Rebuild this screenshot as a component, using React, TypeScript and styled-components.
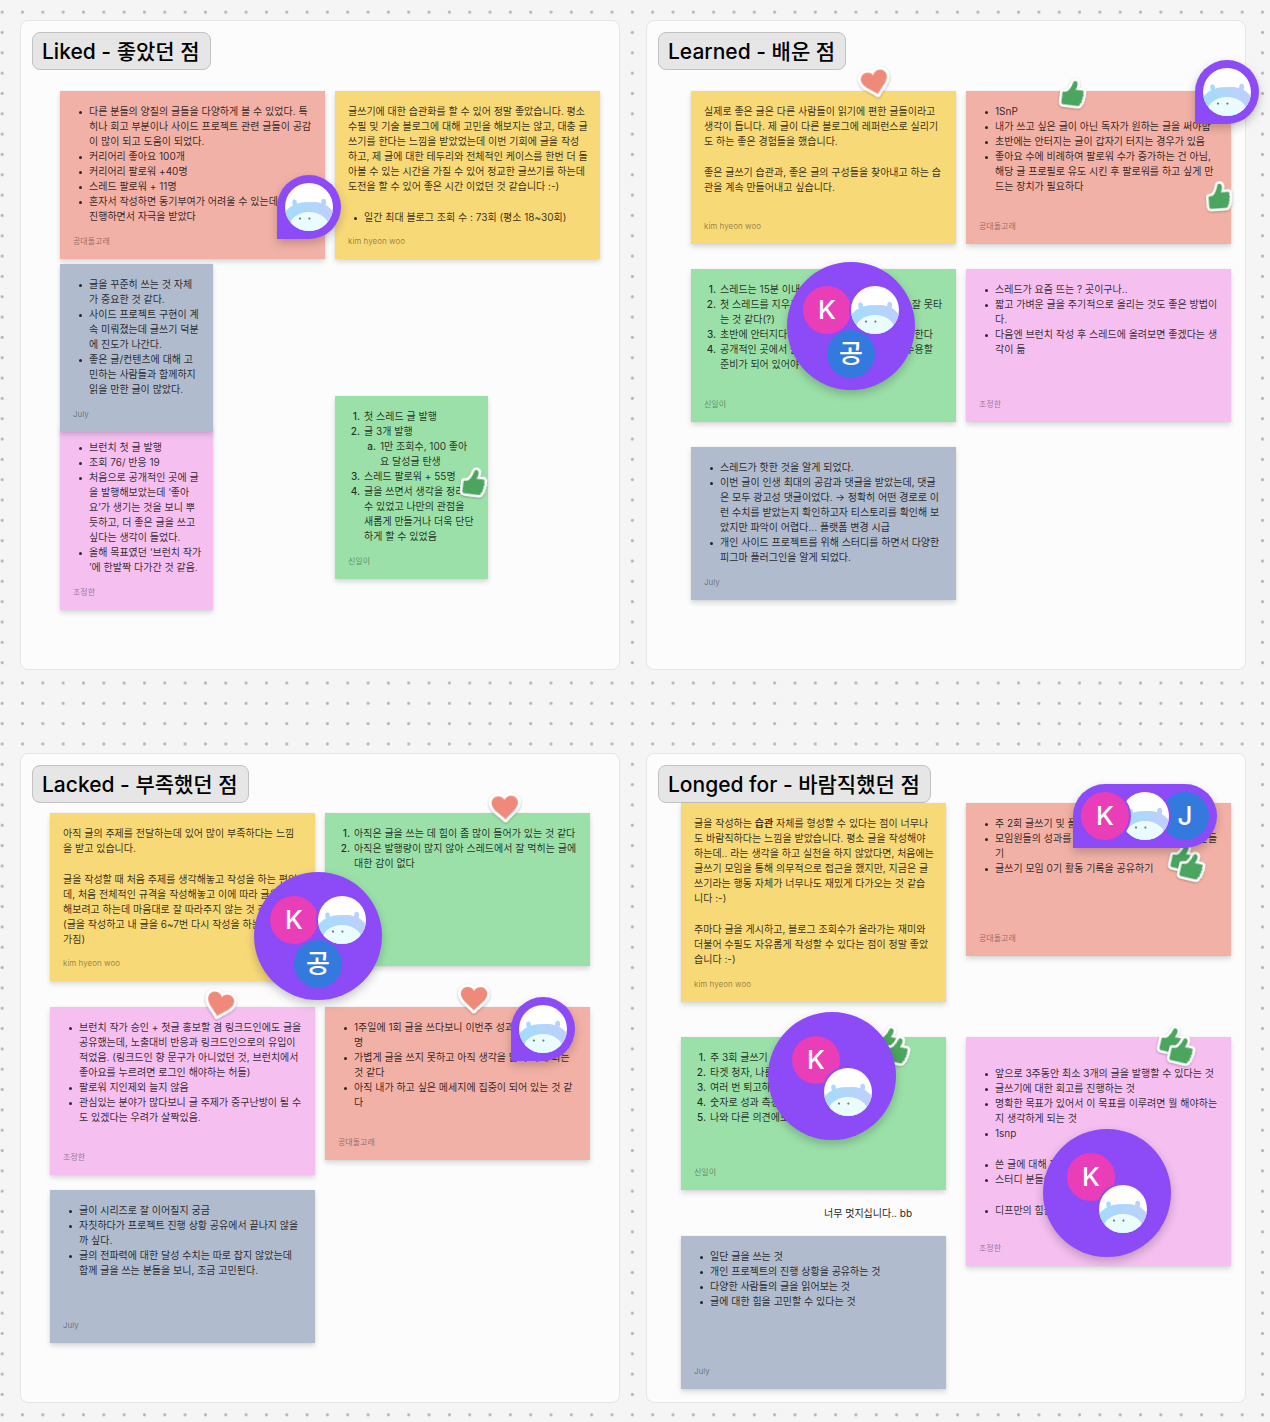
import React from "react";
import styled, { createGlobalStyle, css } from "styled-components";

const GlobalStyle = createGlobalStyle`
  *, *::before, *::after { box-sizing: border-box; }
  body {
    margin: 0;
    background: #f5f5f5;
    font-family: Inter, "Noto Sans CJK KR", sans-serif;
    color: #1e1e1e;
  }
  h2, p, ul, ol { margin: 0; padding: 0; }
`;

const palette = {
  coral: "#f2b1a6",
  yellow: "#f8d978",
  green: "#9be0a9",
  blue: "#b0bbcd",
  pink: "#f5bff0",
  purple: "#8c4bf6",
};

type Tone = "coral" | "yellow" | "green" | "blue" | "pink";

const Canvas = styled.main`
  display: grid;
  grid-template-columns: repeat(2, minmax(600px, 1fr));
  column-gap: 26px;
  row-gap: 83px;
  min-height: 100vh;
  padding: 20px 24px 19px 20px;
  background-color: #f5f5f5;
  background-image: radial-gradient(circle at center, #b4b4b4 1px, transparent 2px);
  background-size: calc(61px / 3) calc(61px / 3);
  background-position: -8px 2px;
`;

const Board = styled.section`
  position: relative;
  min-height: 650px;
  padding: 12px;
  border-radius: 8px;
  background: #fcfcfc;
  box-shadow: inset 0 0 0 1px #e6e6e6;
`;

const Title = styled.h2`
  display: inline-block;
  padding: 1px 10px 0 9px;
  border: 1px solid #c2c2c2;
  border-radius: 8px;
  background: #e6e6e6;
  color: #000;
  font-size: 21px;
  font-weight: 500;
  line-height: 35px;
  white-space: nowrap;
`;

interface Spot {
  $x: number;
  $y: number;
}

const placed = css<Spot>`
  position: absolute;
  left: ${(p) => p.$x}px;
  top: ${(p) => p.$y}px;
`;

const Note = styled.article<Spot & { $tone: Tone; $w: number; $h: number }>`
  ${placed}
  display: flex;
  flex-direction: column;
  justify-content: space-between;
  width: ${(p) => p.$w}px;
  min-height: ${(p) => p.$h}px;
  padding: 13px;
  background: ${(p) => palette[p.$tone]};
  box-shadow: 0 3px 5px rgba(0, 0, 0, 0.14), 0 0 1px rgba(0, 0, 0, 0.1);
  font-size: 10px;
  line-height: 15px;
  color: rgba(0, 0, 0, 0.8);
`;

const Paragraph = styled.p`
  white-space: pre;

  & + &, & + ul {
    margin-top: 16px;
  }
`;

const Line = styled.span`
  display: block;
`;

const Item = styled.li<{ $spaced?: boolean }>`
  display: grid;
  grid-template-columns: 12px 1fr;
  column-gap: 4px;
  margin-top: ${(p) => (p.$spaced ? 16 : 0)}px;
  white-space: pre;
`;

const BulletList = styled.ul`
  list-style: none;

  & > li::before {
    content: "";
    justify-self: end;
    width: 3px;
    height: 3px;
    margin: 7px 3px 0 0;
    border-radius: 50%;
    background: currentColor;
  }
`;

const NumberList = styled.ol<{ $alpha?: boolean }>`
  list-style: none;
  counter-reset: row;

  & > li {
    counter-increment: row;
  }

  & > li::before {
    content: counter(row, ${(p) => (p.$alpha ? "lower-alpha" : "decimal")}) ".";
    text-align: right;
    font-weight: 500;
  }
`;

const Author = styled.footer`
  font-size: 8px;
  line-height: 10px;
  color: rgba(0, 0, 0, 0.42);
`;

const FreeText = styled.p<Spot>`
  ${placed}
  font-size: 10px;
  line-height: 15px;
  white-space: nowrap;
`;

const pinShape = css`
  padding: 0;
  border: 0;
  background: ${palette.purple};
  box-shadow: 0 4px 10px rgba(0, 0, 0, 0.22);
  cursor: pointer;
`;

const Pin = styled.button<Spot>`
  ${placed}
  ${pinShape}
  display: flex;
  padding: 8px;
  border-radius: 32px 32px 32px 0;
`;

const Cluster = styled.button<Spot>`
  ${placed}
  ${pinShape}
  width: 128px;
  height: 128px;
  border-radius: 50%;
`;

const Face = styled.span<{ $color: string }>`
  display: grid;
  place-items: center;
  width: 48px;
  height: 48px;
  overflow: hidden;
  border-radius: 50%;
  background: ${(p) => p.$color};
  box-shadow: 0 0 0 2px ${palette.purple};
  color: #fff;
  font-family: Inter, "Noto Sans CJK KR", sans-serif;
  font-size: 26px;
  font-weight: 500;
  line-height: 48px;
`;

const Slot = styled.span<Spot>`
  ${placed}
`;

const Stacked = styled.span<{ $order: number }>`
  position: relative;
  z-index: ${(p) => p.$order};

  & + & {
    margin-left: -8px;
  }
`;

const Sticker = styled.svg<Spot & { $turn: number }>`
  ${placed}
  overflow: visible;
  transform: rotate(${(p) => p.$turn}deg);
  filter: drop-shadow(0 1px 1px rgba(0, 0, 0, 0.25));
`;

function Hippo() {
  return (
    <Face $color="#fff">
      <svg width="48" height="48" viewBox="0 0 48 48" aria-hidden="true">
        <defs>
          <linearGradient id="hippo-skin" gradientUnits="userSpaceOnUse" x1="0" x2="48" y1="24" y2="24">
            <stop offset="0" stopColor="#a3dcfb" />
            <stop offset="1" stopColor="#bfcffc" />
          </linearGradient>
          <linearGradient id="hippo-snout" x1="0" x2="0" y1="0" y2="1">
            <stop offset="0" stopColor="#eefcfe" />
            <stop offset="1" stopColor="#e2fbfc" />
          </linearGradient>
        </defs>
        <path
          d="M-2 35C-1 29 3 25 8 22.6C7 20.4 6.6 16.6 9.4 16.6C11.6 16.6 12 18.4 12 20.8C14 20 16 19.4 18.5 19.2L29 19C31.5 19 34 19.4 36.2 20.2C36 18 36.6 15.8 38.8 15.8C41.6 15.8 41.4 19.6 40.6 22C45 24.4 49 28.6 50 34V50H-2Z"
          fill="url(#hippo-skin)"
        />
        <ellipse cx="24" cy="45.5" rx="20.5" ry="16.5" fill="url(#hippo-snout)" />
        <circle cx="15" cy="35.6" r="1.1" fill="#5f7d8c" />
        <circle cx="24.4" cy="35.6" r="1.1" fill="#5f7d8c" />
      </svg>
    </Face>
  );
}

const Kim = () => <Face $color="#ea3db8">K</Face>;
const Gong = () => <Face $color="#3479de">공</Face>;
const July = () => <Face $color="#3479de">J</Face>;

function HippoPin({ x, y }: { x: number; y: number }) {
  return (
    <Pin type="button" aria-label="댓글" $x={x} $y={y}>
      <Hippo />
    </Pin>
  );
}

function TrioCluster({ x, y }: { x: number; y: number }) {
  return (
    <Cluster type="button" aria-label="댓글 3명" $x={x} $y={y}>
      <Slot $x={16} $y={24}><Kim /></Slot>
      <Slot $x={64} $y={24}><Hippo /></Slot>
      <Slot $x={40} $y={68}><Gong /></Slot>
    </Cluster>
  );
}

function DuoCluster({ x, y }: { x: number; y: number }) {
  return (
    <Cluster type="button" aria-label="댓글 2명" $x={x} $y={y}>
      <Slot $x={24} $y={24}><Kim /></Slot>
      <Slot $x={56} $y={56}><Hippo /></Slot>
    </Cluster>
  );
}

interface StickerProps {
  x: number;
  y: number;
  turn: number;
}

function Heart({ x, y, turn }: StickerProps) {
  const d = "M14 24.4C10 19.6 .8 14.4 .8 7.8C.8 3.8 3.8 1 7.4 1C10.3 1 12.8 2.6 14 5C15.2 2.6 17.7 1 20.6 1C24.2 1 27.2 3.8 27.2 7.8C27.2 14.4 18 19.6 14 24.4Z";
  return (
    <Sticker width="28" height="25" viewBox="0 0 28 25" $x={x} $y={y} $turn={turn} aria-hidden="true">
      <path d={d} fill="#fff" stroke="#fff" strokeWidth="6" strokeLinejoin="round" />
      <path d={d} fill="#ef8a7b" />
    </Sticker>
  );
}

function Thumb({ x, y, turn }: StickerProps) {
  const d =
    "M1.5 13.2L6 12.2C8.6 9.8 10 6 10.8 2.4C11.4 -.2 15.2 .2 15.4 3.4C15.5 5.8 14.8 7.8 14 9.6L21 9.2C23 9.4 23.2 11.8 21.8 12.6C23.4 13.2 23.4 15.4 21.8 16C23 16.8 22.8 18.8 21.4 19.4C22.4 20.4 21.8 22.4 20.4 22.6C21 24 20 25.2 18.6 25.2L4.2 25.6C2.6 25.6 1.8 24.8 1.7 23.4Z";
  return (
    <Sticker width="24" height="26" viewBox="0 0 24 26" $x={x} $y={y} $turn={turn} aria-hidden="true">
      <path d={d} fill="#fff" stroke="#fff" strokeWidth="5" strokeLinejoin="round" />
      <path d={d} fill="#4ba55f" />
    </Sticker>
  );
}

interface NoteProps {
  tone: Tone;
  x: number;
  y: number;
  w?: number;
  h?: number;
  author?: string;
  children: React.ReactNode;
}

function Sticky({ tone, x, y, w = 265, h = 153, author, children }: NoteProps) {
  return (
    <Note $tone={tone} $x={x} $y={y} $w={w} $h={h}>
      <div>{children}</div>
      {author && <Author>{author}</Author>}
    </Note>
  );
}

const Bullets = ({ items }: { items: string[] }) => (
  <BulletList>
    {items.map((text) => (
      <Item key={text}>{text}</Item>
    ))}
  </BulletList>
);

const Numbers = ({ items }: { items: string[] }) => (
  <NumberList>
    {items.map((text) => (
      <Item key={text}>{text}</Item>
    ))}
  </NumberList>
);

function LikedBoard() {
  return (
    <Board>
      <Title>Liked - 좋았던 점</Title>
      <Sticky tone="coral" x={40} y={71} h={168} author="공대돌고래">
        <Bullets
          items={[
            "다른 분들의 양질의 글들을 다양하게 볼 수 있었다. 특\n히나 회고 부분이나 사이드 프로젝트 관련 글들이 공감\n이 많이 되고 도움이 되었다.",
            "커리어리 좋아요 100개",
            "커리어리 팔로워 +40명",
            "스레드 팔로워 + 11명",
            "혼자서 작성하면 동기부여가 어려울 수 있는데\n진행하면서 자극을 받았다",
          ]}
        />
      </Sticky>
      <Sticky tone="yellow" x={315} y={71} h={168} author="kim hyeon woo">
        <Paragraph>
          {"글쓰기에 대한 습관화를 할 수 있어 정말 좋았습니다. 평소\n수필 및 기술 블로그에 대해 고민을 해보지는 않고, 대충 글\n쓰기를 한다는 느낌을 받았었는데 이번 기회에 글을 작성\n하고, 제 글에 대한 테두리와 전체적인 케이스를 한번 더 돌\n아볼 수 있는 시간을 가질 수 있어 정교한 글쓰기를 하는데\n도전을 할 수 있어 좋은 시간 이었던 것 같습니다 :-)"}
        </Paragraph>
        <Bullets items={["일간 최대 블로그 조회 수 : 73회 (평소 18~30회)"]} />
      </Sticky>
      <Sticky tone="pink" x={40} y={407} w={153} h={183} author="조정한">
        <Bullets
          items={[
            "브런치 첫 글 발행",
            "조회 76/ 반응 19",
            "처음으로 공개적인 곳에 글\n을 발행해보았는데 ‘좋아\n요’가 생기는 것을 보니 뿌\n듯하고, 더 좋은 글을 쓰고\n싶다는 생각이 들었다.",
            "올해 목표였던 ‘브런치 작가\n’에 한발짝 다가간 것 같음.",
          ]}
        />
      </Sticky>
      <Sticky tone="blue" x={40} y={244} w={153} h={168} author="July">
        <Bullets
          items={[
            "글을 꾸준히 쓰는 것 자체\n가 중요한 것 같다.",
            "사이드 프로젝트 구현이 계\n속 미뤄졌는데 글쓰기 덕분\n에 진도가 나간다.",
            "좋은 글/컨텐츠에 대해 고\n민하는 사람들과 함께하지\n읽을 만한 글이 많았다.",
          ]}
        />
      </Sticky>
      <Sticky tone="green" x={315} y={376} w={153} h={183} author="신일이">
        <NumberList>
          <Item>첫 스레드 글 발행</Item>
          <Item>
            <div>
              글 3개 발행
              <NumberList $alpha>
                <Item>{"1만 조회수, 100 좋아\n요 달성글 탄생"}</Item>
              </NumberList>
            </div>
          </Item>
          <Item>스레드 팔로워 + 55명</Item>
          <Item>{"글을 쓰면서 생각을 정리할\n수 있었고 나만의 관점을\n새롭게 만들거나 더욱 단단\n하게 할 수 있었음"}</Item>
        </NumberList>
      </Sticky>
      <Thumb x={442} y={449} turn={8} />
      <HippoPin x={257} y={155} />
    </Board>
  );
}

function LearnedBoard() {
  return (
    <Board>
      <Title>Learned - 배운 점</Title>
      <Sticky tone="yellow" x={45} y={71} author="kim hyeon woo">
        <Paragraph>
          {"실제로 좋은 글은 다른 사람들이 읽기에 편한 글들이라고\n생각이 듭니다. 제 글이 다른 블로그에 레퍼런스로 실리기\n도 하는 좋은 경험들을 했습니다."}
        </Paragraph>
        <Paragraph>{"좋은 글쓰기 습관과, 좋은 글의 구성들을 찾아내고 하는 습\n관을 계속 만들어내고 싶습니다."}</Paragraph>
      </Sticky>
      <Sticky tone="coral" x={320} y={71} author="공대돌고래">
        <Bullets
          items={[
            "1SnP",
            "내가 쓰고 싶은 글이 아닌 독자가 원하는 글을 써야함",
            "초반에는 안터지는 글이 갑자기 터지는 경우가 있음",
            "좋아요 수에 비례하여 팔로워 수가 증가하는 건 아님,\n해당 글 프로필로 유도 시킨 후 팔로워를 하고 싶게 만\n드는 장치가 필요하다",
          ]}
        />
      </Sticky>
      <Sticky tone="green" x={45} y={249} author="신일이">
        <Numbers
          items={[
            "스레드는 15분 이내에 반응",
            "첫 스레드를 지우고 다시 올리면은 알고리즘을 잘 못타\n는 것 같다(?)",
            "초반에 안터지다가 나중에 터질 수 있으니 봐야 한다",
            "공개적인 곳에서 글을 쓰면 더 다양한 의견을 수용할\n준비가 되어 있어야 한다",
          ]}
        />
      </Sticky>
      <Sticky tone="pink" x={320} y={249} author="조정한">
        <Bullets
          items={[
            "스레드가 요즘 뜨는 ? 곳이구나..",
            "짧고 가벼운 글을 주기적으로 올리는 것도 좋은 방법이\n다.",
            "다음엔 브런치 작성 후 스레드에 올려보면 좋겠다는 생\n각이 듦",
          ]}
        />
      </Sticky>
      <Sticky tone="blue" x={45} y={427} author="July">
        <Bullets
          items={[
            "스레드가 핫한 것을 알게 되었다.",
            "이번 글이 인생 최대의 공감과 댓글을 받았는데, 댓글\n은 모두 광고성 댓글이었다. → 정확히 어떤 경로로 이\n런 수치를 받았는지 확인하고자 티스토리를 확인해 보\n았지만 파악이 어렵다... 플랫폼 변경 시급",
            "개인 사이드 프로젝트를 위해 스터디를 하면서 다양한\n피그마 플러그인을 알게 되었다.",
          ]}
        />
      </Sticky>
      <Heart x={215} y={50} turn={-14} />
      <Thumb x={415} y={60} turn={8} />
      <Thumb x={561} y={163} turn={-3} />
      <TrioCluster x={141} y={242} />
      <HippoPin x={549} y={40} />
    </Board>
  );
}

function LackedBoard() {
  return (
    <Board>
      <Title>Lacked - 부족했던 점</Title>
      <Sticky tone="yellow" x={30} y={60} h={168} author="kim hyeon woo">
        <Paragraph>{"아직 글의 주제를 전달하는데 있어 많이 부족하다는 느낌\n을 받고 있습니다."}</Paragraph>
        <Paragraph>
          {"글을 작성할 때 처음 주제를 생각해놓고 작성을 하는 편인\n데, 처음 전체적인 규격을 작성해놓고 이에 따라 글을 작성\n해보려고 하는데 마음대로 잘 따라주지 않는 것 같습니다\n(글을 작성하고 내 글을 6~7번 다시 작성을 하는 마음\n가짐)"}
        </Paragraph>
      </Sticky>
      <Sticky tone="green" x={305} y={60}>
        <Numbers items={["아직은 글을 쓰는 데 힘이 좀 많이 들어가 있는 것 같다", "아직은 발행량이 많지 않아 스레드에서 잘 먹히는 글에\n대한 감이 없다"]} />
      </Sticky>
      <Sticky tone="pink" x={30} y={254} h={168} author="조정한">
        <Bullets
          items={[
            "브런치 작가 승인 + 첫글 홍보할 겸 링크드인에도 글을\n공유했는데, 노출대비 반응과 링크드인으로의 유입이\n적었음. (링크드인 향 문구가 아니었던 것, 브런치에서\n좋아요를 누르려면 로그인 해야하는 허들)",
            "팔로워 지인제외 늘지 않음",
            "관심있는 분야가 많다보니 글 주제가 중구난방이 될 수\n도 있겠다는 우려가 살짝있음.",
          ]}
        />
      </Sticky>
      <Sticky tone="coral" x={305} y={254} author="공대돌고래">
        <Bullets
          items={[
            "1주일에 1회 글을 쓰다보니 이번주 성과 팔로워 +2\n명",
            "가볍게 글을 쓰지 못하고 아직 생각을 많이 하게 되는\n것 같다",
            "아직 내가 하고 싶은 메세지에 집중이 되어 있는 것 같\n다",
          ]}
        />
      </Sticky>
      <Sticky tone="blue" x={30} y={437} author="July">
        <Bullets
          items={[
            "글이 시리즈로 잘 이어질지 궁금",
            "자칫하다가 프로젝트 진행 상황 공유에서 끝나지 않을\n까 싶다.",
            "글의 전파력에 대한 달성 수치는 따로 잡지 않았는데\n함께 글을 쓰는 분들을 보니, 조금 고민된다.",
          ]}
        />
      </Sticky>
      <Heart x={471} y={42} turn={-3} />
      <Heart x={186} y={239} turn={14} />
      <Heart x={440} y={233} turn={1} />
      <TrioCluster x={234} y={119} />
      <HippoPin x={491} y={244} />
    </Board>
  );
}

function LongedForBoard() {
  return (
    <Board>
      <Title>Longed for - 바람직했던 점</Title>
      <Sticky tone="yellow" x={35} y={50} h={199} author="kim hyeon woo">
        <Paragraph>
          <Line>
            {"글을 작성하는 "}
            <b>습관</b>
            {" 자체를 형성할 수 있다는 점이 너무나"}
          </Line>
          {"도 바람직하다는 느낌을 받았습니다. 평소 글을 작성해야\n하는데.. 라는 생각을 하고 실천을 하지 않았다면, 처음에는\n글쓰기 모임을 통해 의무적으로 접근을 했지만, 지금은 글\n쓰기라는 행동 자체가 너무나도 재밌게 다가오는 것 같습\n니다 :-)"}
        </Paragraph>
        <Paragraph>{"주마다 글을 게시하고, 블로그 조회수가 올라가는 재미와\n더불어 수필도 자유롭게 작성할 수 있다는 점이 정말 좋았\n습니다 :-)"}</Paragraph>
      </Sticky>
      <Sticky tone="coral" x={320} y={50} author="공대돌고래">
        <Bullets items={["주 2회 글쓰기 및 플랫폼 발행", "모임원들의 성과를 함께 공유할 수 있는 콘텐츠를 만들\n기", "글쓰기 모임 0기 활동 기록을 공유하기"]} />
      </Sticky>
      <Sticky tone="green" x={35} y={284} author="신일이">
        <Numbers items={["주 3회 글쓰기", "타겟 청자, 나름의 기준", "여러 번 퇴고하는 습관", "숫자로 성과 측정하기", "나와 다른 의견에도 열린 자세"]} />
      </Sticky>
      <Sticky tone="pink" x={320} y={284} h={229} author="조정한">
        <BulletList>
          <Item $spaced>앞으로 3주동안 최소 3개의 글을 발행할 수 있다는 것</Item>
          <Item>글쓰기에 대한 회고를 진행하는 것</Item>
          <Item>{"명확한 목표가 있어서 이 목표를 이루려면 뭘 해야하는\n지 생각하게 되는 것"}</Item>
          <Item>1snp</Item>
          <Item $spaced>쓴 글에 대해 피드백 받기</Item>
          <Item>스터디 분들이 함께함</Item>
          <Item $spaced>디프만의 힘을 느낀 것</Item>
        </BulletList>
      </Sticky>
      <FreeText $x={178} $y={453}>너무 멋지십니다.. bb</FreeText>
      <Sticky tone="blue" x={35} y={483} author="July">
        <Bullets items={["일단 글을 쓰는 것", "개인 프로젝트의 진행 상황을 공유하는 것", "다양한 사람들의 글을 읽어보는 것", "글에 대한 힘을 고민할 수 있다는 것"]} />
      </Sticky>
      <Thumb x={525} y={91} turn={14} />
      <Thumb x={534} y={100} turn={14} />
      <Thumb x={230} y={274} turn={14} />
      <Thumb x={239} y={284} turn={14} />
      <Thumb x={514} y={274} turn={14} />
      <Thumb x={524} y={284} turn={14} />
      <Pin type="button" aria-label="댓글 3명" $x={427} $y={31}>
        <Stacked $order={3}><Kim /></Stacked>
        <Stacked $order={2}><Hippo /></Stacked>
        <Stacked $order={1}><July /></Stacked>
      </Pin>
      <DuoCluster x={122} y={259} />
      <DuoCluster x={397} y={376} />
    </Board>
  );
}

export default function App() {
  return (
    <>
      <GlobalStyle />
      <Canvas>
        <LikedBoard />
        <LearnedBoard />
        <LackedBoard />
        <LongedForBoard />
      </Canvas>
    </>
  );
}
